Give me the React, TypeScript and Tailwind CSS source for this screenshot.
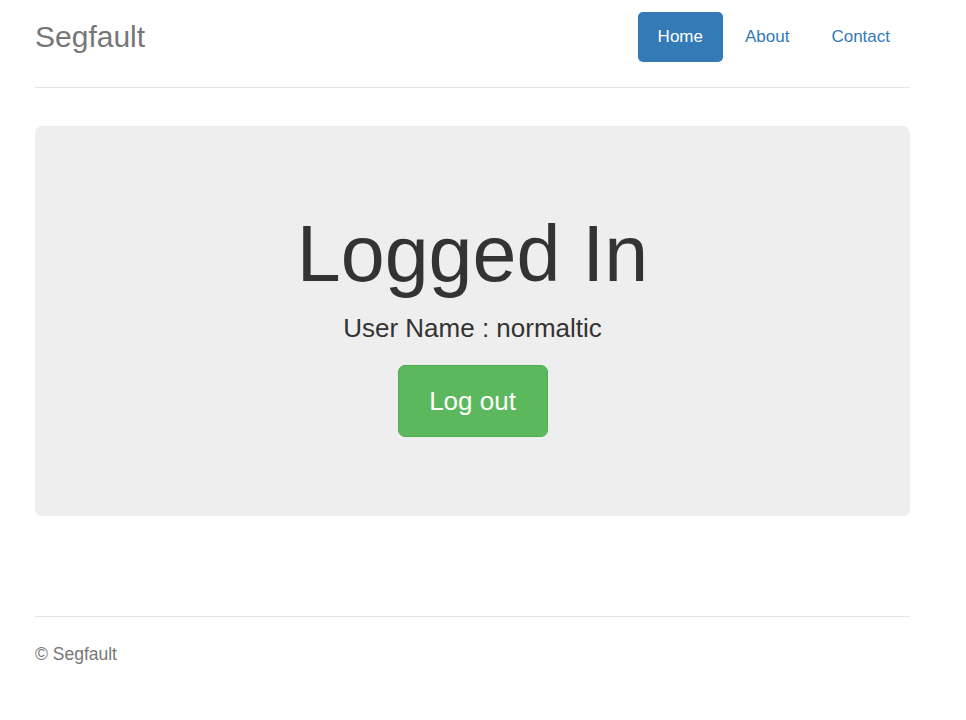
export default function App() {
  return (
    <div
      className="min-h-[720px] bg-white text-[#333]"
      style={{ fontFamily: '"Liberation Sans", Arial, sans-serif' }}
    >
      <div className="ml-[35px] w-[875px]">
        <header className="flex items-center justify-between border-b border-[#e5e5e5] pt-[12px] pb-[25px]">
          <h3 className="text-[30px] leading-[50px] text-[#777]">Segfault</h3>
          <nav className="flex gap-[2px]">
            <a className="flex h-[50px] items-center rounded-[5px] bg-[#337ab7] px-[20px] text-[17px] text-white">
              Home
            </a>
            <a className="flex h-[50px] items-center rounded-[5px] px-[20px] text-[17px] text-[#337ab7]">
              About
            </a>
            <a className="flex h-[50px] items-center rounded-[5px] px-[20px] text-[17px] text-[#337ab7]">
              Contact
            </a>
          </nav>
        </header>

        <main className="mt-[38px] flex h-[390px] flex-col items-center rounded-[7px] bg-[#eee] pt-[84px]">
          <h1 className="text-[79px] leading-[88px]">Logged In</h1>
          <p className="mt-[15px] text-[26px] leading-[30px]">User Name : normaltic</p>
          <button className="mt-[22px] h-[72px] w-[150px] rounded-[7px] border border-[#4cae4c] bg-[#5cb85c] text-[26px] text-white">
            Log out
          </button>
        </main>

        <footer className="mt-[100px] border-t border-[#e5e5e5] pt-[25px]">
          <p className="text-[17.5px] leading-[24px] text-[#777]">© Segfault</p>
        </footer>
      </div>
    </div>
  );
}
